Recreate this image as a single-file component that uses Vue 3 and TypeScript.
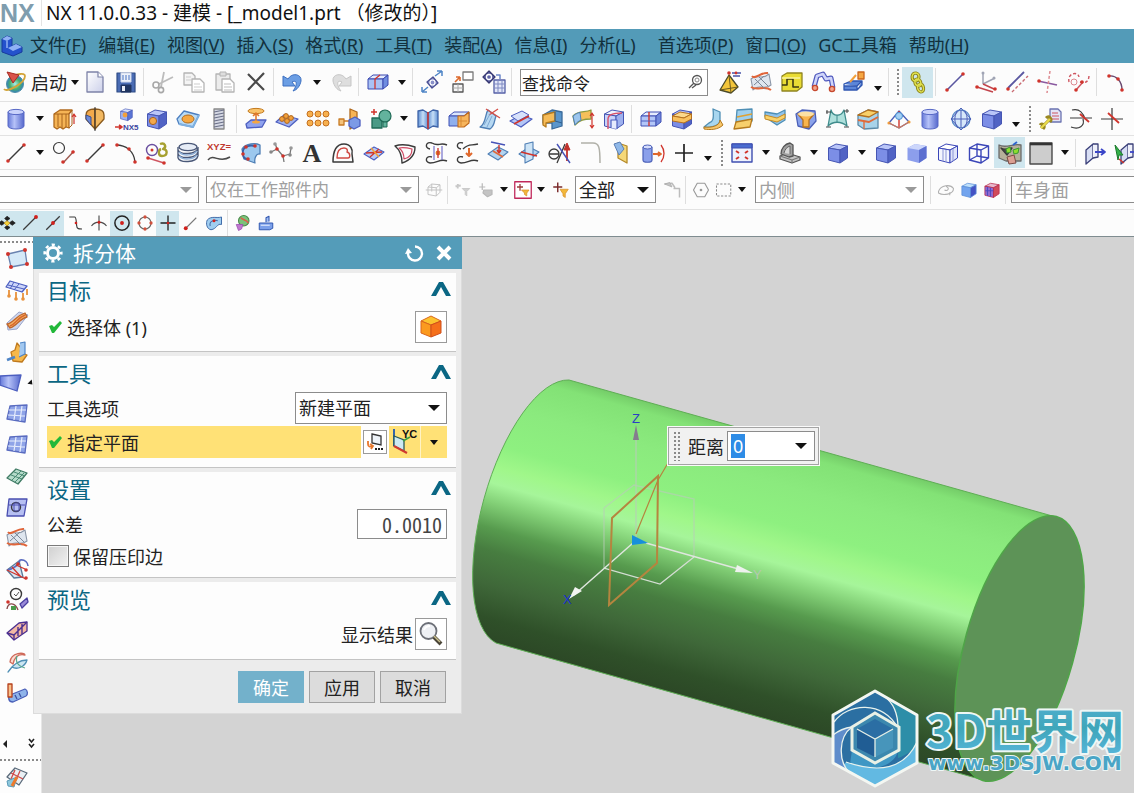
<script setup lang="ts">
import { ref } from 'vue'

type Menu = { text: string; key?: string; wide?: boolean }

const menus: Menu[] = [
  { text: '文件', key: 'F' },
  { text: '编辑', key: 'E' },
  { text: '视图', key: 'V' },
  { text: '插入', key: 'S' },
  { text: '格式', key: 'R' },
  { text: '工具', key: 'T' },
  { text: '装配', key: 'A' },
  { text: '信息', key: 'I' },
  { text: '分析', key: 'L' },
  { text: '首选项', key: 'P', wide: true },
  { text: '窗口', key: 'O' },
  { text: 'GC工具箱' },
  { text: '帮助', key: 'H' },
]

/* ---- drawing helpers for the 24 x 24 icon grid ---- */
const p = (d: string, stroke = 'none', fill = 'none', w = 1.3): string =>
  `<path d="${d}" stroke="${stroke}" fill="${fill}" stroke-width="${w}" stroke-linejoin="round"/>`
const dot = (x: number, y: number, c = '#d0342c', r = 1.8): string => `<circle cx="${x}" cy="${y}" r="${r}" fill="${c}"/>`
const ring = (x: number, y: number, r: number, c: string, w = 1.3, f = 'none'): string =>
  `<circle cx="${x}" cy="${y}" r="${r}" stroke="${c}" stroke-width="${w}" fill="${f}"/>`
const cube = (front = '#7c8ee6', top = '#b9c5f8', side = '#5163c4', edge = '#4656b4'): string =>
  p('M2.500 7 10 3 21.500 5 14 9Z', edge, top, 1) + p('M2.500 7 14 9V22L2.500 19Z', edge, front, 1) + p('M14 9 21.500 5V17L14 22Z', edge, side, 1)
const slab = (front: string, top: string, side: string, edge: string): string =>
  p('M2 9 7 5H22L17 9Z', edge, top, 1) + p('M2 9H17V19H2Z', edge, front, 1) + p('M17 9 22 5V15L17 19Z', edge, side, 1)
const cyl = (f = 'url(#gBlueH)', s = '#5869c6'): string =>
  p('M4 5V19C4 23 20 23 20 19V5', s, f, 1) + `<ellipse cx="12" cy="5" rx="8" ry="2.600" fill="#c9d2fb" stroke="${s}"/>`
const sheet = (f = '#a9d3ee', s = '#4f7fb5'): string => p('M2 13 12 6 22 11 12 19Z', s, f, 1.1)
const wave = (f: string, s: string): string => p('M2 9C8 3 12 11 20 4L22 15C15 21 10 13 4 20Z', s, f, 1.1)

const R = '#d0342c'
const K = '#3a3a3a'
const G = '#b4b4b4'
const B = '#4d5fc0'
const O = '#f2a03a'

const icons: Record<string, string> = {
  launch: ring(12, 14, 8.500, '#4f8fa8', 1, 'url(#gGlobe)') + p('M1 19C4 23 22 13 22 6C22 2 12 5 12 5', '#d3a53a', 'none', 1.8) + p('M4 2 16 5 10 13Z', '#a82a22', '#d9534a', 1),
  new: p('M4 2H15L20 7V22H4Z', '#7d83a8', 'url(#gPage)', 1.3) + p('M15 2V7H20', '#7d83a8', '#fff', 1.2),
  save: p('M3 3H21V22H3Z', '#2f4c86', '#4a6cb4', 1.2) + p('M7 3H17V12H7Z', '#cfd8ea', '#eef2fa', 1) + p('M7 15H17V22H7Z', '#203560', '#203560', 1) + p('M8 16H11V21H8Z', 'none', '#e8ecf5') + p('M9 5V10M12 5V10M15 5V10', '#6d8fd0'),
  cut: p('M22 7 8 14M13 2 10 17', '#bcbcbc', 'none', 1.8) + ring(5, 15, 3, '#a8a8a8', 1.6) + ring(10, 20, 2.600, '#a8a8a8', 1.6),
  copy: p('M2 3H10L13 6V15H2Z', G, '#f4f4f4') + p('M10 9H18L22 13V22H10Z', G, '#fff') + p('M12 14H18M12 17H20M12 20H20M4 7H9M4 10H9', '#cdcdcd', 'none', 1),
  paste: p('M3 4H17V20H3Z', G, '#ececec') + p('M7 2H13V6H7Z', G, '#ddd', 1) + p('M9 9H17L21 13V22H9Z', G, '#fff') + p('M11 14H18M11 17H19M11 20H19', '#bdbdbd', 'none', 1),
  del: p('M4 4 20 20M20 3 4 20', '#4a4a4a', 'none', 2.2),
  undo: p('M7 9C11 2 21 4 20 11C19 16 16 20 12 21C16 16 17 9 11 12L14 16H2V6Z', '#3c6fc0', '#6b9ee4', 1),
  redo: p('M17 9C13 2 3 4 4 11C5 16 8 20 12 21C8 16 7 9 13 12L10 16H22V6Z', '#c6c6c6', '#dedede', 1),
  boxRed: slab('#a9c2f4', '#e3ebfd', '#6f8de0', '#3a49b0') + p('M9 9V19M9 9 14 5', R, 'none', 1.3),
  diag: p('M7 12 13 7 18 13 12 18Z', '#4a4f93', '#8990c9') + ring(12.500, 12.500, 2.500, '#fff', 1.2) + p('M15 6 22 1M22 1V6M22 1H17M8 17 2 22M2 22V17M2 22H7', '#4f85c6', 'none', 1.5),
  move2: p('M12 2H22V10H12Z', '#7a7a7a', '#fff') + p('M2 14H12V22H2Z', '#555', '#f6f6f6') + p('M2 18H12M7 14V22', '#aaa', 'none', 1) + p('M4 12 9 7M9 7H5M9 7V11', '#dd6a2c', 'none', 1.6),
  grids: p('M7 1 13 7 7 13 1 7Z', '#35366f', '#5f64a6') + ring(7, 7, 2.500, '#fff', 1.3) + p('M12 10H23V23H12Z', '#5560a6', '#e2e6f8') + p('M12 14H23M12 18H23M16 10V23M20 10V23', '#7f8ac2', 'none', 1) + p('M14 5H18V9', '#6b86c9', 'none', 1.5),
  pyramid: p('M11 5 2 20 13 23 20 17Z', '#4a4a2a', '#f3c53a') + p('M11 5 13 23M2 20 20 17', '#6c5a1c', 'none', 1) + dot(11, 3) + p('M14 3H23M15 6H22', '#4753a8', 'none', 1.4) + dot(18, 3, R, 1.4),
  mesh: wave('#dfe6ef', '#8a95a6') + p('M3 6C6 10 12 2 19 3M2 17C8 21 16 15 22 20', '#e0653a', 'none', 2) + p('M6 9 16 19M10 7 19 16M5 15 15 6', '#7b8797', 'none', 1),
  yellowBox: p('M2 6 7 3H22V17L17 21H2Z', '#8f8420', '#e9dc34') + p('M2 15H7V9H13V17H19', '#3d3a12', 'none', 1.6) + p('M2 8H20', '#f9f39a', 'none', 1.6),
  pipe: p('M3 17 6 6 12 4 15 9 20 8 22 18', '#5059bd', 'none', 5) + p('M3 17 6 6 12 4 15 9 20 8 22 18', '#cfd5fa', 'none', 2.6) + ring(4, 18, 2.600, '#c6482e', 1.4, '#f3a48c') + ring(21, 19, 2.600, '#c6482e', 1.4, '#f3a48c'),
  blueUp: p('M2 14 9 11H20L15 16H2ZM2 14V20H15V16M15 20 20 15V11', '#2f56b0', '#5c86d8') + p('M8 12 14 5', O, 'none', 2) + p('M16 2H22V9H16Z', '#c8641c', '#f5a742'),
  chain: p('M10 3C5 3 5 10 9 11C13 12 15 4 10 3ZM11 9C8 9 8 15 12 16C16 17 16 10 11 9ZM14 14C10 14 11 21 15 22C19 22 18 14 14 14Z', '#8c8416', 'none', 3.2) + p('M10 3C5 3 5 10 9 11C13 12 15 4 10 3ZM11 9C8 9 8 15 12 16C16 17 16 10 11 9ZM14 14C10 14 11 21 15 22C19 22 18 14 14 14Z', '#dfe04f', 'none', 1.3),
  line: p('M4 20 20 4', K, 'none', 1.4) + dot(4, 20) + dot(20, 4),
  lineB: p('M4 20 20 4', '#5a57a0', 'none', 1.6) + dot(4, 20) + dot(20, 4),
  csys: p('M9 14V3M9 14 21 8', '#a0a4b4', 'none', 1.5) + p('M3 17 19 22M9 14 20 19', '#c2444c', 'none', 1.5) + dot(3, 17) + dot(21, 19) + dot(20, 8, '#a0a4b4', 1.5) + dot(9, 3, '#a0a4b4', 1.5),
  parallel: p('M3 18 19 2', '#5a57a0', 'none', 1.8) + dot(3, 19) + `<path d="M7 22 23 6" fill="none" stroke="#c96a72" stroke-width="1.400" stroke-dasharray="3 2"/>`,
  cross: p('M2 11 21 15', '#8a5aa0', 'none', 1.6) + dot(3, 11) + `<path d="M14 1 11 23" fill="none" stroke="#dd8c92" stroke-width="1.500" stroke-dasharray="3 2"/>`,
  tangent: `<path d="M2 12C0 3 11 1 12 7M13 12C20 14 22 10 22 5" fill="none" stroke="#cf5560" stroke-width="1.400" stroke-dasharray="3 2"/>` + p('M9 20 16 12', '#cf5560', 'none', 1.5) + dot(9, 20) + dot(15, 12) + ring(7, 12, 3, '#dc8890', 1),
  arc: p('M5 6C12 5 18 11 18 20', '#6a4a70', 'none', 1.4) + dot(5, 6) + dot(14, 9) + dot(18, 20),
  cylinder: cyl(),
  extrude: p('M2 7 8 3H20L17 7V21L14 20 11 22 8 20 5 22 2 20Z', '#b06a1e', '#f5b455') + p('M6 7V20M10 7V21M14 7V20M2 7H17L20 3V18L17 21', '#a8641e', 'none', 1) + p('M22 17V8M20 10 22 7 24 10', R, 'none', 1.2),
  revolve: p('M12 2C6 2 3 4 3 8V12L12 22Z', '#8a5a1e', '#f2a94b') + p('M12 2C18 2 21 4 21 8V12L12 22Z', '#8a5a1e', '#f2b860') + p('M3 8 8 10V18L3 12Z', '#3a4e8a', '#6d8ad8', 1) + p('M12 0V24', '#333', 'none', 1),
  nx5: `<g transform="translate(5 0) scale(.62)">${cube('#9db2f2', '#d6e0fc', '#5a74d4')}</g>` + dot(11, 8, O, 2.400) + p('M1 20H7M5 18 8 20 5 22', R, 'none', 1.6) + '<text x="9" y="23" font-size="8" font-weight="700" font-family="Liberation Sans" fill="#3b46a0">NX5</text>',
  cubeHole: cube() + ring(8, 14, 3.600, '#a8641e', 1, '#f3a94c'),
  plateHole: p('M1 12 8 4 23 8 17 20 3 17Z', '#4d7fc0', '#b9dbf6') + `<ellipse cx="12" cy="12" rx="6" ry="4" fill="#f5a742" stroke="#b06a1e"/>` + p('M3 17 17 20 23 8', '#7fb0e0', 'none', 2),
  screw: p('M7 2H17V22H7Z', '#888', '#d5d8e4') + p('M7 5 17 3M7 8 17 6M7 11 17 9M7 14 17 12M7 17 17 15M7 20 17 18', '#6b7088', 'none', 1.2),
  pad: p('M2 17 7 13H22L18 20 3 21Z', B, '#8fa2ee') + `<ellipse cx="12" cy="4" rx="8" ry="2.600" fill="#f9c36a" stroke="#c47a1e"/>` + p('M12 15V6M9 9 12 6 15 9', '#e0782c', 'none', 1.6) + `<ellipse cx="12" cy="15" rx="4" ry="1.600" fill="#f5a742"/>`,
  patternA: p('M1 15 9 8 23 12 14 20Z', B, '#9fb0ee') + [[7, 12], [12, 14], [11, 9], [16, 11]].map(([x, y]) => ring(x, y, 2.400, '#b0661c', 1, '#f2a03a')).join(''),
  patternB: [4, 12, 20].map((x) => ring(x, 7, 3, '#c46f1e', 1, '#f7b04e') + ring(x, 16, 3, '#c46f1e', 1, '#f7b04e')).join(''),
  mirrorF: p('M13 2 20 5V17L13 22Z', '#b06a1e', '#f7b455') + p('M2 12H7V18H2ZM7 14H12', '#c77a24', '#f4c27a') + p('M12 13 18 10 23 13V19L17 22 12 19Z', B, '#7c9ae6'),
  plusGreen: p('M6 8V2M3 5H9', R, 'none', 1.5) + p('M4 11H14V21H4Z', '#1e6a56', '#4a9a86') + ring(17, 9, 6, '#1e6a56', 1.2, '#63b39d') + p('M15 15H19V20H15Z', '#1e6a56', '#63b39d', 1),
  book: p('M2 4 7 3 12 6V22L7 19 2 20Z', '#3f64a8', 'url(#gSky)') + p('M22 4 17 3 12 6V22L17 19 22 20Z', '#3f64a8', 'url(#gSky)') + p('M12 5V22', R, 'none', 1.5),
  splitB: slab('#8fb0ee', '#dbe6fc', '#5a7bd8', '#4050b4') + p('M11 9H17L22 5V16L17 20H11Z', '#c06a1c', '#f7b55c', 1.1) + p('M14 9V19M11 14H20', '#d88a34', 'none', 1),
  trim: p('M2 20C8 17 7 7 10 3L18 9C16 14 17 19 12 22Z', '#4f7fb5', '#b6d8f2') + p('M8 2 22 11M11 8 20 2', '#d64f47', 'none', 1.4) + p('M6 18 12 7M9 20 14 9', '#7fa9d4', 'none', 1),
  trimSheet: p('M1 14 12 8 23 12 12 20Z', B, '#b4c6f6') + p('M2 9 13 4 20 8 9 14Z', B, '#d7e1fb', 1) + p('M5 17 20 9', R, 'none', 1.6),
  cutBody: p('M3 8 12 3 22 5V19L12 22V16H3Z', '#3a6a9a', '#5a96cc') + p('M3 8 15 5V14L6 16V20L3 18Z', '#b57a1e', '#f6bc58') + p('M15 5V14L22 16', '#2f5f90', 'none', 1),
  bend: p('M2 9C8 3 14 6 20 3V12C13 12 9 13 4 18Z', '#8b9a40', '#f5c05a') + p('M2 9C6 6 7 6 9 5.500L10 13C8 14 6 15 4 18Z', '#4f7fb5', '#9cc6ee', 1) + p('M21 6V21M19 9 21 6 23 9M19 18 21 21 23 18', R, 'none', 1.2),
  shell: cube('#c7d3fa', '#eff3fe', '#9db0ee') + p('M6 22V12C6 8 12 6 20 6', '#d64f6a', 'none', 1.4) + p('M9 21V13H15V22', B, '#e6ebfd', 1.2),
  slab1: slab('#b2c6f8', '#e6edfe', '#7088dc', '#4050b4') + p('M10 5V19', R, 'none', 1.4) + p('M2 14H17', B, 'none', 1),
  slab2: cube() + p('M2.500 9 10 5 21.500 7 14 11Z', '#b5701c', '#fbd98c', 1) + p('M2.500 9 14 11 21.500 7V12L14 16 2.500 14Z', '#b5701c', '#f8c15e', 1),
  flange: p('M12 2 19 5V13C19 19 10 21 3 20L8 16C12 15 13 12 12 2Z', '#4f8fb5', '#a8d6ef') + p('M3 20C10 21 19 19 19 13L22 18C17 23 9 23 3 22Z', '#b57a1e', '#f7c66a', 1),
  flange2: p('M5 3 20 2V14L4 15Z', '#4f8fb5', '#9fd0ee') + p('M4 15 20 12 18 20 2 22Z', '#b57a1e', '#f7cf6c') + p('M5 10 20 7', '#e0a030', 'none', 1.6),
  loftS: p('M2 5 14 7 22 3V13L14 18 2 10Z', '#4f8fb5', '#8fc3ec') + p('M2 8 14 11 22 7V11L14 15 2 12Z', '#c58a24', '#f9d26a', 1),
  funnel: p('M2 7 8 3 21 4 22 14 15 22 4 19Z', '#4a5fb8', '#8aa2ea') + p('M4 7H20L15 13V20H9V13Z', '#b5701c', '#f8b44e') + `<ellipse cx="12" cy="7" rx="8" ry="2.500" fill="#fbe0a4"/>`,
  saddle: p('M6 3C8 10 16 10 19 3L22 19C16 14 8 14 3 19Z', '#3f8c8c', '#aee0dc') + p('M1 5H6M19 4H24M1 20H6M19 20H24M2 3V7M22 2V6', '#444', 'none', 1) + p('M12 9V15', '#3f8c8c', 'none', 1),
  ribbon: p('M2 8 12 3 22 5V21L8 22 2 18Z', '#5b8aa8', '#a8d3ea') + p('M2 8 12 3 22 5 13 10Z', '#b5701c', '#f8d06a') + p('M2 13 13 15 22 10', '#e06a3a', 'none', 2) + p('M8 14V22', '#e06a3a', 'none', 1.4),
  cone3: p('M12 4 2 16 12 21 22 15Z', '#4a5fb8', 'none') + p('M12 4V20', R, 'none', 1.4) + ring(12, 9, 3.500, '#4a8fd0', 1, '#a4d0f4') + dot(2, 16, '#f2a03a', 1.6) + dot(22, 15, '#f2a03a', 1.6) + p('M2 16 12 21 22 15', '#cf7a5a', 'none', 1.3),
  cylBlue: cyl(),
  sphere: ring(12, 12, 9, '#5a8cc8', 1.3, '#d6e8fa') + p('M12 1 22 12 12 23 2 12ZM3 12H21M12 3V21M8 4C5 10 5 16 9 21M16 4C19 10 19 16 15 21', '#4a5fb8', 'none', 1),
  cube: cube(),
  cubeSoft: p('M2.500 7 10 3 21.500 5V17L14 22 2.500 19Z', 'none', '#8c9eec') + p('M2.500 7 10 3 21.500 5 14 9Z', 'none', '#ccd6fb') + p('M14 9 21.500 5V17L14 22Z', 'none', '#5c6fd0'),
  cubeWireA: cube('#f4f6fe', '#fff', '#dfe4fa', '#3b46b8') + p('M7 8V20M10 9V21M17 8V20', '#8b96d6', 'none', 1),
  cubeWire: p('M2.500 7 10 3 21.500 5 14 9ZM2.500 7V19L14 22V9M21.500 5V17L14 22M10 3V15L2.500 19M10 15 21.500 17', '#3b46b8', 'none', 1.4),
  wrench: p('M12 2H20L23 5V15H12Z', '#6a72b0', '#e3e5f6') + p('M14 6H20M14 9H21M14 12H21', '#cf5560', 'none', 1) + p('M3 21 12 12M8 11C11 8 15 12 12 15M2 18C4 15 8 19 5 22', '#9a8820', 'none', 3) + p('M3 21 12 12', '#eadd4c', 'none', 2),
  curveX: p('M3 3C11 1 14 6 16 12M1 11H23M2 20C10 23 16 19 14 12', K, 'none', 1.2) + p('M11 7 20 15', R, 'none', 1.8),
  crossX: p('M12 1V23M1 12H23', K, 'none', 1.2) + p('M8 6 19 16', R, 'none', 1.8),
  circLine: ring(7, 7, 5.500, K, 1.2) + p('M11 22 22 10', '#9c5a50', 'none', 1.4) + dot(11, 21) + dot(21, 11),
  arc3: p('M2 4C12 4 20 10 21 21', K, 'none', 1.3) + dot(3, 4) + dot(15, 8) + dot(21, 21),
  rings: ring(7, 9, 5.500, '#6a4fa0', 1.4) + dot(7, 9, R, 1.5) + p('M15 3C20 1 22 6 18 8C23 8 23 15 17 15C13 15 13 9 16 8', '#a6a030', 'none', 2.4) + p('M3 17 19 22', '#cf5560', 'none', 1.4) + dot(3, 17) + dot(19, 22),
  helix: `<ellipse cx="12" cy="6" rx="9" ry="3.600" fill="#e6ecf6" stroke="#4a5878" stroke-width="1.400"/>` + p('M2 9C4 14 20 14 22 7M2 13C4 18 20 18 22 11M2 17C4 22 20 22 22 15M2 6V17M22 6V15', '#4a5878', 'none', 1.4) + p('M3 11C8 16 18 14 21 10M3 15C8 20 18 18 21 14', '#8fb0d8', 'none', 1.4),
  xyz: '<text x="0" y="9" font-size="9.500" font-weight="700" font-family="Liberation Sans" fill="#c0392f">XYZ=</text>' + p('M1 19C7 12 12 23 23 16', '#4a4a4a', 'none', 1.5),
  surfPts: p('M4 8C8 2 18 2 22 4V13C18 12 16 18 17 22L6 18Z', '#4f7fb5', '#9cc8ee') + p('M17 5C8 3 4 8 5 13C5 16 7 18 10 18', '#3a5fa8', 'none', 1.8) + dot(5, 13) + dot(8, 6) + dot(17, 5) + dot(10, 18),
  nodes: p('M2 11 8 8 14 15 21 13M8 8 6 2M14 15 15 21M21 13 22 7', '#777', 'none', 1.3) + dot(2, 11, '#888') + dot(6, 3, '#999') + dot(8, 8) + dot(14, 15) + dot(21, 14, '#888') + dot(22, 7, '#999'),
  letter: '<text x="12" y="21" text-anchor="middle" font-size="26" font-weight="700" font-family="Liberation Serif" fill="#333">A</text>',
  offset: p('M2 21C2 8 6 3 13 3C20 3 22 9 21 13L22 21Z', K, 'none', 1.5) + p('M6 17C6 10 9 7 13 7C16 7 17 9 16 11C20 12 19 17 17 17Z', '#cf4a44', 'none', 1.4),
  sheetRed: sheet('#b9c9f6', B) + p('M4 12 20 11M8 16 17 8', R, 'none', 1.3) + p('M9 7 17 16', O, 'none', 1.6),
  shield: p('M2 5C8 3 16 4 22 6C22 14 18 19 9 22C9 15 7 9 2 5Z', K, 'none', 1.4) + p('M6 7C11 6 15 7 19 8C19 13 16 17 11 18C11 13 10 10 6 7Z', '#cf4a64', 'none', 1.2),
  joinA: p('M8 2C2 0 0 7 6 8M8 2C14 6 16 1 23 4M8 16C2 14 0 21 6 22M6 22C14 22 16 17 23 20', K, 'none', 1.4) + p('M10 5V19M18 5V19', '#5a57c0', 'none', 1) + dot(14, 12, '#e0782c', 2.400) + p('M14 7V17', R, 'none', 1.3),
  joinB: p('M8 2C2 0 0 7 6 8M8 8C14 2 16 5 23 3M8 16C2 14 0 21 6 22M6 22C14 22 16 17 23 20', K, 'none', 1.4) + p('M14 7V14M11 12 14 15 17 12', '#e0682c', 'none', 2),
  project: sheet('#b2d4f0', '#4f7fb5') + p('M5 1 19 4', '#4753b8', 'none', 1.6) + p('M13 4V11M11 9 13 12 15 9', R, 'none', 1.4) + p('M7 10 17 16', '#e06a3a', 'none', 1.6),
  interS: sheet('#b2d4f0', '#4f7fb5') + p('M8 3 16 1V18L8 22Z', '#4f7fb5', '#cde4f6', 1.1) + p('M4 11 20 15', R, 'none', 1.8),
  sketchX: ring(6, 13, 5, K, 1.3) + p('M1 13H11M17 3 9 22', K, 'none', 1.3) + p('M19 20V7', '#c0322c', 'none', 1.8) + p('M16 9 19 2 22 9Z', '#c0322c', '#c0322c', 1) + p('M9 3 22 22', '#4753b8', 'none', 1.4),
  corner: p('M2 2H14C20 2 21 6 21 22', '#b0b0a8', 'none', 1.5),
  foldY: p('M8 2 17 5V22L8 17Z', '#b58a2a', '#f5d878') + p('M4 3 10 1 14 8 9 14Z', '#5a7fb5', '#8fb8e8', 1),
  cylArrow: p('M2 6V19C2 22 11 22 11 19V6', '#4a5fb8', '#8ba0ea', 1.2) + `<ellipse cx="6.500" cy="6" rx="4.500" ry="2" fill="#d4dcfb" stroke="#4a5fb8"/>` + p('M12 13H19M17 11 20 13 17 15', '#e0682c', 'none', 1.8) + p('M20 4C24 9 24 16 20 21', R, 'none', 1.3),
  plus: p('M12 3V21M3 12H21', '#222', 'none', 1.7),
  fit: p('M2 3H22V21H2Z', '#3f4fb0', '#eef2fd', 1.4) + p('M2 3H22V7H2Z', '#3f4fb0', '#4a6cd0', 1) + p('M6 10 9 12M6 18 9 16M18 10 15 12M18 18 15 16', R, 'none', 2),
  orient: p('M2 15 9 12 22 16V19L14 22 2 18Z', '#555', '#c4c4c4') + p('M3 13C3 7 7 3 12 2L15 4V15L11 16Z', '#555', '#a0a0a0') + p('M6 12C7 8 9 6 12 5V13', '#666', '#d8d8d8', 1) + p('M2 15 14 19 22 16M14 19V22', '#777', 'none', 1.2),
  render: p('M1 4C8 8 15 2 23 4V20H8L1 17Z', '#6b6b6b', '#b5b09a') + p('M3 7C8 10 12 6 14 7L9 14Z', '#3a3a3a', '#4a4a4a') + p('M8 8 12 6 13 11 9 12ZM15 9 21 7 20 12 16 13Z', '#3a9a30', '#8ede2c', 1) + p('M15 4 19 1', '#2f66d0', 'none', 1.8) + p('M9 16 16 14 18 22 11 23Z', '#7a4a44', '#dba093', 1),
  swatch: p('M1 2H23V23H1Z', '#4a4a4a', '#cdcdcd', 1.4) + p('M1 3H23', '#333', 'none', 2.6),
  clipA: p('M3 9 10 3V17L3 23Z', '#3a3f78', '#d8def4') + p('M10 3H15V16L10 17', '#3a3f78', '#eef0fa') + p('M12 11H21M18 8 22 11 18 14', '#3b46c8', 'none', 1.8),
  clipB: p('M7 9 14 3V17L7 23Z', '#3a3f78', '#d8def4') + p('M14 3H19V16L14 17', '#3a3f78', '#eef0fa') + p('M1 4 9 14 5 14 4 19Z', '#1a7a2a', '#35b04a', 1) + p('M5 18 10 22', R, 'none', 1.6) + p('M16 11H23', '#3b46c8', 'none', 1.8),
  ghostCube: p('M4 8 9 4 20 5V15L15 20 4 18ZM4 8 15 9 20 5M15 9V20M9 4V14M1 12H23', '#c2c2c2', 'none', 1.3),
  ghostFilter: p('M2 7 9 6M5 4V10', '#c8c8c8', 'none', 2.4) + p('M11 10H21L17 14V20L15 18V14Z', '#c8c8c8', '#d0d0d0'),
  ghostHand: p('M3 8H11M7 3V12M9 12H20V18L14 21 8 16Z', '#b8b8b8', '#c4c4c4', 1.6),
  snapBox: p('M1 1H23V23H1Z', '#c0285a', '#fff', 1.7) + p('M8 4V13M4 8H12', '#9c3a3a', 'none', 1.7) + p('M10 12H20L17 16V20L14 18V16Z', '#d9902c', '#f2b83a', 1),
  snapStar: p('M9 2V15M3 8H15', '#7a2a2a', 'none', 1.9) + p('M12 11H23L19 17V22L16 20V17Z', '#d9902c', '#f2b83a', 1),
  ghostArrow: p('M2 4 12 3 16 9M14 10H22V22', '#bdbdbd', 'none', 2) + p('M2 4 9 2 12 8Z', '#aaa', '#c4c4c4', 1),
  hexDot: p('M7 3H17L22 12 17 21H7L2 12Z', '#999', 'none', 1.5) + dot(12, 12, '#999', 1.8),
  dashBox: '<rect x="2" y="4" width="19" height="16" fill="none" stroke="#8a8a8a" stroke-width="1.400" stroke-dasharray="3 2"/>',
  ghostEye: p('M2 14C5 5 18 4 22 10C22 18 8 20 2 16ZM12 7C18 10 14 14 10 12M17 15V19', '#b0b0b0', 'none', 1.4),
  cubeSky: cube('#72a4ee', '#bfe0fa', '#4452c4', '#5a8ed8'),
  cubeMag: cube('#8f6ad0', '#e8b8cc', '#d04a5a', '#b82a4a') + p('M6 8V20M10 9V21M3 13H14', '#4a4ac0', 'none', 1.2),
  sQuads: p('M1 12 5 9 9 12 5 15ZM9 6 12 3 16 6 12 9ZM15 12 19 9 23 12 19 15ZM9 18 12 15 16 18 12 21Z', '#222', '#222', 1) + p('M8 12 12 9 16 12 12 16Z', '#b58a2a', '#f6d23a', 1),
  sEnd: p('M3 21 20 4', K, 'none', 1.7) + dot(20, 4, '#d0201c', 2.600),
  sMid: p('M3 21 21 3', K, 'none', 1.7) + dot(12, 12, '#d0201c', 2.600),
  sCtrl: p('M3 4H10C13 4 12 12 13 16C13 20 16 20 20 20', K, 'none', 1.5) + dot(12, 12, '#d0201c', 1.8),
  sInt: p('M12 2V22M2 16C7 9 17 9 22 16', '#4a4a4a', 'none', 1.5) + dot(12, 11, '#d0201c', 2),
  sCen: ring(12, 12, 9.500, '#222', 2) + dot(12, 12, '#d0201c', 2.600),
  sQuad: ring(12, 12, 8, '#6a6a6a', 1.5) + dot(12, 4, '#d0503c', 2.200) + dot(12, 20, '#d0503c', 2.200) + dot(4, 12, '#d0503c', 2.200) + dot(20, 12, '#d0503c', 2.200),
  sPt: p('M12 2V22M2 12H22', '#222', 'none', 1.8) + dot(12, 12, '#d0201c', 1.8),
  sOn: p('M4 20 19 5', '#7a7a7a', 'none', 1.5) + dot(5, 19, '#d0201c', 2.600),
  sFace: p('M3 8C8 2 16 6 22 4V14C16 12 16 20 8 21C2 20 1 12 3 8Z', '#3f6aa8', '#9fcdf0') + p('M7 16C5 10 12 7 17 9', '#3f6aa8', 'none', 1.4) + dot(12, 9, '#d0201c', 2),
  bulb: ring(13, 9, 7, '#4a8a4a', 1.4, '#7cc27a') + p('M9 5C13 9 17 7 19 12', '#e05a4a', 'none', 2) + p('M3 14H12L10 20 6 22Z', '#9a4ab0', '#c07ad0', 1),
  press: p('M3 12H21V19L17 21H3Z', '#2f56b0', '#7ba0ea') + p('M12 11V5L16 3V10', '#2f56b0', '#a4bff4', 1.4) + p('M5 15H17', '#dbe6fc', 'none', 1.6),
  quad: p('M3 7 20 3 22 17 6 20Z', '#6a83b0', '#d5e9f8') + dot(3, 7, R, 2) + dot(20, 3, R, 2) + dot(22, 17, R, 2) + dot(6, 20, R, 2),
  gridDown: p('M5 3 22 8 17 14 1 9Z', B, '#cdd6fa') + p('M9 4 5 11M14 6 9 12M3 7 19 11', B, 'none', 1) + p('M4 12V18M11 14V21M18 15V21M22 11V17', '#e8923c', 'none', 1.8) + dot(4, 18, '#e8923c') + dot(11, 21, '#e8923c') + dot(18, 21, '#e8923c'),
  tape: p('M2 14 14 3 23 6 12 20 3 21Z', '#9aa4c8', '#cdd6ee', 1) + p('M2 15C9 14 10 7 20 4L22 8C14 10 12 17 5 19Z', '#c0662c', '#f4b266') + p('M5 17C11 15 12 9 20 6', '#d9662c', 'none', 1.4),
  star: p('M6 12 10 10 12 3 16 8 15 12 22 15 17 22 8 21Z', '#c07a1e', '#f6b84a') + p('M15 3 20 2V14L14 17', '#4f85c6', '#a2c8f0', 1.2) + p('M2 20 10 17', '#4f85c6', 'none', 2.6),
  plane: p('M-5 5 16 4 12 20 -5 14Z', B, 'url(#gBlueH)'),
  gridP: p('M5 4 22 3 20 20 2 17Z', '#5a6cc0', '#8fa4e8') + p('M4 8 21 8M3 13 20 14M11 4 9 18M17 4 15 19', '#e8eefc', 'none', 1.2),
  gridGreen: p('M2 14 11 5 22 9 13 20Z', '#3f7a64', '#b6dccb') + p('M6 11 17 15M9 8 20 12M7 16 16 7M10 18 19 9', '#4a8a74', 'none', 1),
  gridRound: p('M4 4H22L19 21H2Z', '#4a4fb0', '#b6bff2') + ring(11, 12, 4.500, K, 1.4) + p('M4 10H20M9 8H14V16H9Z', '#4a4fb0', 'none', 1),
  fan: p('M2 13 14 4 18 20 9 21Z', '#5a7a9a', '#d8e6f2') + p('M2 13C8 12 14 8 15 3C20 2 23 6 23 9', '#5a6cc0', 'none', 1.6) + p('M2 13 21 22M7 10 16 20M11 8 20 12', R, 'none', 1.3) + dot(13, 7) + dot(21, 13) + dot(21, 21),
  clock: ring(11, 6, 5.500, K, 1.4) + p('M9 6 11 8 14 4', '#555', 'none', 1) + p('M15 16 22 10 23 14 17 20Z', '#4a3fa0', '#9a8ad8') + p('M2 21C3 14 10 14 13 22', '#8a4a4a', 'none', 1.4) + p('M6 18H11V22H6Z', 'none', '#4a9a4a') + dot(3, 14),
  prism: p('M2 14 14 4 22 3V12L9 21Z', '#4a2f90', '#f2b8a4') + p('M2 14 9 16V21M9 16 22 3M13 8V17M17 5V15', '#4a2f90', 'none', 1.4),
  swoosh: p('M5 12C6 2 20 2 20 5C12 3 9 9 8 14Z', '#cf6a5a', '#fbdcd2') + p('M3 22C7 16 14 10 22 10C20 17 12 20 7 17Z', '#4f8fb5', '#cbe6f2') + p('M12 6C10 12 13 16 20 18', '#5aa88a', 'none', 1.3),
  tube: p('M5 14 20 8C23 9 23 14 21 15L8 21C3 21 3 16 5 14Z', '#4a5fb8', '#8fb4ea') + p('M3 3H7V16H3Z', '#b5401c', '#f8c08a') + p('M10 14 12 18M14 12 16 16', '#3a4fa0', 'none', 1.3),
  plane3d: p('M2 12 10 3 22 8 14 20Z', '#5a6a7a', '#eaf0f4') + p('M6 8 18 14M10 5 6 14M15 6 10 17', '#cf4a4a', 'none', 1.3) + p('M2 16 12 12 9 22 3 21Z', '#5a9ab8', '#8ec8dc', 1) + p('M7 21 12 12', '#ee7a2c', 'none', 3),
}

const rowStandard1 = ['new', 'save', '|', 'cut', 'copy', 'paste', 'del', '|', 'undo', 'v', 'redo', '|', 'boxRed', 'v', '|', 'diag', 'move2', 'grids', '|']
const rowStandard2 = ['pyramid', 'mesh', 'yellowBox', 'pipe', 'blueUp', 'V', '|', ':', '*chain', '|', 'lineB', 'csys', 'parallel', 'cross', 'tangent', '|', 'arc']
const rowFeature = ['cylinder', 'v', 'extrude', 'revolve', 'nx5', 'cubeHole', 'plateHole', 'screw', '|', 'pad', 'patternA', 'patternB', 'mirrorF', 'plusGreen', 'v', 'book', 'splitB', 'trim', 'trimSheet', 'cutBody', 'bend', 'shell', '|', 'slab1', 'slab2', 'flange', 'flange2', 'loftS', 'funnel', 'saddle', 'ribbon', 'cone3', 'cylBlue', 'sphere', 'cube', 'V', ':', 'wrench', 'curveX', 'crossX']
const rowCurve = ['line', 'v', 'circLine', 'line', 'arc3', 'rings', 'helix', 'xyz', 'surfPts', 'nodes', 'letter', 'offset', 'sheetRed', 'shield', 'joinA', 'joinB', 'project', 'interS', 'sketchX', 'corner', 'foldY', 'cylArrow', 'plus', 'V', ':', 'fit', 'v', 'orient', 'v', 'cube', 'v', 'cube', 'cubeSoft', 'cubeWireA', 'cubeWire', '*render', 'swatch', 'v', '|', 'clipA', 'clipB']
const filterA = ['ghostCube', '|', 'ghostFilter', 'ghostHand', 'v', 'snapBox', 'v', 'snapStar']
const filterB = ['ghostArrow', '|', 'hexDot', 'dashBox', 'v']
const filterC = ['|', 'ghostEye', 'cubeSky', 'cubeMag', '|']
const rowSnap = ['*sQuads', '*sEnd', '*sMid', 'sCtrl', 'sInt', '*sCen', 'sQuad', '*sPt', 'sOn', 'sFace', '|', 'bulb', 'press']
const side = ['quad', 'gridDown', 'tape', 'star', 'plane', 'gridP', 'gridP', 'gridGreen', 'gridRound', 'mesh', 'fan', 'clock', 'prism', 'swoosh', 'tube']

const kind = (t: string): string =>
  t === '|' ? 'sep' : t === ':' ? 'grip' : t === 'v' ? 'drop' : t === 'V' ? 'drop low' : t[0] === '*' ? 'tool on' : 'tool'
const art = (t: string): string => icons[t.replace('*', '')] ?? ''
const isTool = (t: string): boolean => kind(t).startsWith('tool')
const isDrop = (t: string): boolean => kind(t).startsWith('drop')

const query = ref('查找命令')
const tolerance = ref('0.0010')
const distance = ref('0')
const keepEdges = ref(false)
</script>

<template>
  <div class="app">
    <svg class="defs" width="0" height="0" aria-hidden="true">
      <defs>
        <linearGradient id="gBlueH"><stop offset="0" stop-color="#6478d8" /><stop offset=".4" stop-color="#b6c2f8" /><stop offset="1" stop-color="#5568cc" /></linearGradient>
        <linearGradient id="gSky"><stop offset="0" stop-color="#5f90d4" /><stop offset=".5" stop-color="#c6def6" /><stop offset="1" stop-color="#5f90d4" /></linearGradient>
        <linearGradient id="gPage" x1="0" y1="0" x2="1" y2="1"><stop offset="0" stop-color="#fff" /><stop offset="1" stop-color="#ccd0ea" /></linearGradient>
        <radialGradient id="gGlobe"><stop offset="0" stop-color="#a8ecec" /><stop offset=".6" stop-color="#4cb06a" /><stop offset="1" stop-color="#2f7fc0" /></radialGradient>
      </defs>
    </svg>

    <header class="title">
      <span class="brand">NX</span>
      <span class="name">NX 11.0.0.33 - 建模 - [_model1.prt （修改的）]</span>
    </header>

    <nav class="menu">
      <svg class="menu-logo" viewBox="0 0 24 24" aria-hidden="true">
        <path d="M2 5 7 2 12 4V12L16 10 22 13V18L13 22 2 18Z" fill="#2452cc" stroke="#173a9c" />
        <path d="M2 5 7 2 12 4 7 7ZM8 14 16 10 22 13 13 17Z" fill="#8fb2f4" />
        <path d="M7 7V14" fill="none" stroke="#8fb2f4" stroke-width="1.500" />
      </svg>
      <button v-for="m in menus" :key="m.text" type="button" :class="['menu-item', { wide: m.wide }]">{{ m.text }}<template v-if="m.key">(<u>{{ m.key }}</u>)</template></button>
    </nav>

    <div class="bar first">
      <button type="button" class="start">
        <svg viewBox="0 0 24 24" v-html="icons.launch"></svg><span>启动</span><i class="caret"></i>
      </button>
      <template v-for="(t, i) in rowStandard1" :key="i">
        <button v-if="isTool(t)" type="button" :class="kind(t)"><svg viewBox="0 0 24 24" v-html="art(t)"></svg></button>
        <button v-else-if="isDrop(t)" type="button" :class="kind(t)"><i class="caret"></i></button>
        <span v-else :class="kind(t)"></span>
      </template>
      <div class="search">
        <input v-model="query" type="text" aria-label="查找命令" />
        <svg viewBox="0 0 16 16" aria-hidden="true">
          <circle cx="10" cy="6" r="4.500" fill="none" stroke="#555" stroke-width="1.300" />
          <circle cx="10" cy="6" r="2" fill="none" stroke="#888" />
          <path d="M7 9 2 14M9 11 5 14" fill="none" stroke="#555" stroke-width="1.300" />
        </svg>
      </div>
      <template v-for="(t, i) in rowStandard2" :key="i">
        <button v-if="isTool(t)" type="button" :class="kind(t)"><svg viewBox="0 0 24 24" v-html="art(t)"></svg></button>
        <button v-else-if="isDrop(t)" type="button" :class="kind(t)"><i class="caret"></i></button>
        <span v-else :class="kind(t)"></span>
      </template>
    </div>

    <div v-for="(row, r) in [rowFeature, rowCurve]" :key="r" class="bar">
      <template v-for="(t, i) in row" :key="i">
        <button v-if="isTool(t)" type="button" :class="kind(t)"><svg viewBox="0 0 24 24" v-html="art(t)"></svg></button>
        <button v-else-if="isDrop(t)" type="button" :class="kind(t)"><i class="caret"></i></button>
        <span v-else :class="kind(t)"></span>
      </template>
    </div>

    <div class="bar filter">
      <div class="pick type"><select aria-label="类型过滤器" disabled><option></option></select><i class="caret dim"></i></div>
      <div class="pick scope"><select aria-label="选择范围" disabled><option>仅在工作部件内</option></select><i class="caret dim"></i></div>
      <template v-for="(t, i) in filterA" :key="i">
        <button v-if="isTool(t)" type="button" :class="kind(t)"><svg viewBox="0 0 24 24" v-html="art(t)"></svg></button>
        <button v-else-if="isDrop(t)" type="button" :class="kind(t)"><i class="caret"></i></button>
        <span v-else :class="kind(t)"></span>
      </template>
      <div class="pick all"><select aria-label="细节过滤"><option>全部</option></select><i class="caret"></i></div>
      <template v-for="(t, i) in filterB" :key="i">
        <button v-if="isTool(t)" type="button" :class="kind(t)"><svg viewBox="0 0 24 24" v-html="art(t)"></svg></button>
        <button v-else-if="isDrop(t)" type="button" :class="kind(t)"><i class="caret"></i></button>
        <span v-else :class="kind(t)"></span>
      </template>
      <div class="pick inside"><select aria-label="选择方式" disabled><option>内侧</option></select><i class="caret dim"></i></div>
      <template v-for="(t, i) in filterC" :key="i">
        <button v-if="isTool(t)" type="button" :class="kind(t)"><svg viewBox="0 0 24 24" v-html="art(t)"></svg></button>
        <span v-else :class="kind(t)"></span>
      </template>
      <div class="pick face"><select aria-label="面规则" disabled><option>车身面</option></select></div>
    </div>

    <div class="bar snap">
      <template v-for="(t, i) in rowSnap" :key="i">
        <button v-if="isTool(t)" type="button" :class="kind(t)"><svg viewBox="0 0 24 24" v-html="art(t)"></svg></button>
        <span v-else :class="kind(t)"></span>
      </template>
    </div>

    <main class="work">
      <aside class="side">
        <div class="dots"></div>
        <button v-for="(t, i) in side" :key="i" type="button" class="side-tool">
          <svg viewBox="0 0 24 24" v-html="art(t)"></svg>
          <i v-if="t === 'plane'" class="mark"></i>
        </button>
        <div class="more">
          <svg viewBox="0 0 42 16" aria-hidden="true"><path d="M7 4V12L3 8Z" fill="#222" /><path d="M29 3 31.500 6 34 3M29 8 31.500 11 34 8" fill="none" stroke="#222" stroke-width="1.600" /></svg>
        </div>
        <div class="dots"></div>
        <button type="button" class="side-tool"><svg viewBox="0 0 24 24" v-html="icons.plane3d"></svg></button>
      </aside>

      <section class="view">
        <svg class="scene" viewBox="42 237 1092 556" preserveAspectRatio="xMinYMin meet" role="img" aria-label="圆柱体">
          <defs>
            <linearGradient id="gBody" gradientUnits="userSpaceOnUse" x1="570" y1="380" x2="496" y2="643">
              <stop offset="0" stop-color="#74cc68" /><stop offset=".04" stop-color="#83e276" /><stop offset=".16" stop-color="#8bea7e" />
              <stop offset=".3" stop-color="#8ef080" /><stop offset=".38" stop-color="#a0f78a" /><stop offset=".44" stop-color="#a6f59a" />
              <stop offset=".51" stop-color="#82cf76" /><stop offset=".6" stop-color="#579b4e" /><stop offset=".68" stop-color="#477d40" />
              <stop offset=".8" stop-color="#3f6839" /><stop offset=".92" stop-color="#2f5029" /><stop offset="1" stop-color="#2c4826" />
            </linearGradient>
            <linearGradient id="gMark" x1="0" y1="0" x2="0" y2="1"><stop offset="0" stop-color="#56b2d6" /><stop offset=".5" stop-color="#3fa6ba" /><stop offset="1" stop-color="#5cb8e0" /></linearGradient>
          </defs>
          <path d="M569 380 1056 517 983 780 496 643A55 137 15.600 0 1 569 380Z" fill="url(#gBody)" stroke="#5fae55" stroke-width="1" />
          <ellipse cx="1019.500" cy="648.500" rx="55" ry="137" transform="rotate(15.600 1019.500 648.500)" fill="#5d9357" stroke="#4fa548" stroke-width="1.500" />

          <g fill="none" stroke="#b9cdb8" stroke-width="1.300">
            <path d="M604 568V508L634 485 694 499V557" opacity=".65" />
            <path d="M636 540V440" opacity=".8" />
            <path d="M604 568 660 584 694 557" stroke="#d3ddd2" />
            <path d="M633 543 574 595M646 543 742 570" stroke="#dfe6de" stroke-width="1.500" />
          </g>
          <path d="M633 440 636 425 639 440Z" fill="#857c8e" />
          <path d="M569 599 575 587 582 591Z" fill="#f2f5f2" />
          <path d="M737 565 753 573 735 572Z" fill="#eef2ee" />
          <g fill="none" stroke="#b5853f" stroke-width="2">
            <path d="M658 476 612 518 609 605 657 563Z" />
            <path d="M668 463 658 480 636 534" stroke-width="1.200" />
          </g>
          <path d="M632 535 648 543 632 545Z" fill="#178fdc" />
          <g class="axis">
            <text x="632" y="423" fill="#2a3fc4">Z</text>
            <text x="563" y="604" fill="#1b2fd0">X</text>
            <text x="753" y="579" fill="#b4c8b0">Y</text>
          </g>

          <path d="M875 691 917 715V763L875 786 833 763V715Z" fill="#2b6fa2" />
          <path d="M884 696 917 715V745C910 752 905 756 898 758V728C898 715 895 704 884 696Z" fill="#2d8ea8" />
          <path d="M852 750 875 763 898 750C896 766 870 774 850 764Z" fill="#3f97c4" />
          <path d="M917 742C905 768 880 774 846 762L842 768 875 786 917 763Z" fill="#62b9e2" />
          <path d="M852 727C838 737 838 762 850 773L833 763V735C838 731 845 728 852 727Z" fill="#5f8dcb" />
          <g fill="none" stroke="#e8f3ee" stroke-width="1.300">
            <path d="M834 722C848 703 882 700 898 728" />
            <path d="M884 696C895 704 898 715 898 728" />
            <path d="M917 742C905 768 880 774 846 762" />
            <path d="M852 727C838 737 838 762 850 773" />
            <path d="M833 735C838 731 845 728 852 727" />
          </g>
          <path d="M875 691 917 715V763L875 786 833 763V715Z" fill="none" stroke="#f4f7f2" stroke-width="3" stroke-linejoin="round" />
          <path d="M875 713 899 727V750L875 763 852 750V727Z" fill="#3c88ae" stroke="#e9f1e6" stroke-width="3" />
          <path d="M875 719 893 729 875 739 857 729Z" fill="#2b6ea4" />
          <path d="M857 729 875 739V757L857 748Z" fill="#205d94" />
          <path d="M893 729 875 739V757L893 748Z" fill="#4795bb" />
          <path d="M857 729 875 739 893 729M875 739V757" fill="none" stroke="#e4eee6" stroke-width="1.300" />
          <text class="mark-big" x="926" y="748">3D世界网</text>
          <text class="mark-small" x="928" y="770">www.3DSJW.COM</text>
        </svg>

        <div class="distance">
          <span class="grip2"></span>
          <label for="distance">距离</label>
          <div class="combo">
            <input id="distance" v-model="distance" type="text" />
            <button type="button" aria-label="展开"><i class="caret"></i></button>
          </div>
        </div>
      </section>

      <section class="dialog" role="dialog" aria-label="拆分体">
        <header>
          <svg class="gear" viewBox="0 0 20 20" aria-hidden="true">
            <circle cx="10" cy="10" r="5.500" fill="none" stroke="#fff" stroke-width="3" />
            <circle cx="10" cy="10" r="8.300" fill="none" stroke="#fff" stroke-width="2.600" stroke-dasharray="3.200 3.320" stroke-dashoffset="1.600" />
          </svg>
          <h1>拆分体</h1>
          <button type="button" aria-label="重置"><svg viewBox="0 0 20 20"><path d="M3 10A7 7 0 1 0 10 3.500" fill="none" stroke="#fff" stroke-width="2.400" /><path d="M0 11 3 5 7 10Z" fill="#fff" /></svg></button>
          <button type="button" aria-label="关闭"><svg viewBox="0 0 20 20"><path d="M4 4 16 16M16 4 4 16" stroke="#fff" stroke-width="4" /></svg></button>
        </header>

        <div class="panel target">
          <div class="head"><h2>目标</h2><button type="button" aria-label="折叠"><svg viewBox="0 0 20 16"><path d="M0 15 8 1H12L20 15H15L10 6 5 15Z" fill="#0b6784" /></svg></button></div>
          <div class="row">
            <svg class="tick" viewBox="0 0 14 14"><path d="M1 6 4 5 6 7 12 1 14 3 6 13H4Z" fill="#22b83a" /></svg>
            <span class="grow">选择体 (1)</span>
            <button type="button" class="square" aria-label="选择体"><svg viewBox="0 0 24 24"><path d="M2 6 12 1 22 6 12 10Z" fill="#fcc22e" stroke="#d9661c" /><path d="M2 6 12 10V22L2 18Z" fill="#fb9a1e" stroke="#d9661c" /><path d="M22 6 12 10V22L22 18Z" fill="#f5701a" stroke="#cf4f1c" /></svg></button>
          </div>
        </div>

        <div class="panel tools">
          <div class="head"><h2>工具</h2><button type="button" aria-label="折叠"><svg viewBox="0 0 20 16"><path d="M0 15 8 1H12L20 15H15L10 6 5 15Z" fill="#0b6784" /></svg></button></div>
          <div class="row">
            <label class="grow" for="tool-option">工具选项</label>
            <div class="pick plane"><select id="tool-option"><option>新建平面</option></select><i class="caret"></i></div>
          </div>
          <div class="row plane-row">
            <div class="active"><svg class="tick" viewBox="0 0 14 14"><path d="M1 6 4 5 6 7 12 1 14 3 6 13H4Z" fill="#22b83a" /></svg><span>指定平面</span></div>
            <button type="button" class="mini" aria-label="平面对话框"><svg viewBox="0 0 20 20"><path d="M7 2 16 4V13L7 11Z" fill="#eef3f8" stroke="#333" stroke-width="1.300" /><path d="M3 9V12C3 15 5 15 7 14M5 12 8 14 6 17" fill="none" stroke="#e8782c" stroke-width="1.800" /><path d="M10 17H12M13 17H15M16 17H18" stroke="#222" stroke-width="2" /></svg></button>
            <button type="button" class="yc" aria-label="YC 平面"><svg viewBox="0 0 30 28"><path d="M4 1V18" stroke="#3565a8" stroke-width="2" /><path d="M4 8 14 12V23L4 18Z" fill="#cdeaf2" stroke="#2a5a5a" stroke-width="1.300" /><path d="M4 18 17 25" stroke="#cf3a30" stroke-width="2" /><path d="M13 13 20 9" stroke="#3aa040" stroke-width="1.600" /><text x="12" y="10" font-size="11" font-weight="700" font-family="Liberation Sans" fill="#111">YC</text></svg></button>
            <button type="button" class="yc-drop" aria-label="更多平面"><i class="caret"></i></button>
          </div>
        </div>

        <div class="panel">
          <div class="head"><h2>设置</h2><button type="button" aria-label="折叠"><svg viewBox="0 0 20 16"><path d="M0 15 8 1H12L20 15H15L10 6 5 15Z" fill="#0b6784" /></svg></button></div>
          <div class="row">
            <label class="grow" for="tolerance">公差</label>
            <input id="tolerance" v-model="tolerance" type="text" class="number" />
          </div>
          <label class="check"><input v-model="keepEdges" type="checkbox" /><span>保留压印边</span></label>
        </div>

        <div class="panel">
          <div class="head"><h2>预览</h2><button type="button" aria-label="折叠"><svg viewBox="0 0 20 16"><path d="M0 15 8 1H12L20 15H15L10 6 5 15Z" fill="#0b6784" /></svg></button></div>
          <div class="row">
            <span class="grow right">显示结果</span>
            <button type="button" class="square near" aria-label="显示结果"><svg viewBox="0 0 24 24"><circle cx="9.500" cy="9" r="8" fill="#eef0f4" stroke="#6d7078" stroke-width="1.800" /><path d="M5 8C6 5 8 4 11 4" fill="none" stroke="#fff" stroke-width="2" /><path d="M15 15 22 22" stroke="#4a4538" stroke-width="4" /><path d="M15 14 21 20" stroke="#c9c08e" stroke-width="1.500" /></svg></button>
          </div>
        </div>

        <footer>
          <button type="button" class="ok">确定</button>
          <button type="button">应用</button>
          <button type="button">取消</button>
        </footer>
      </section>
    </main>
  </div>
</template>

<style>
body {
  background: #d3d3d3;
}
</style>

<style scoped>
.app {
  min-height: 100vh;
  display: flex;
  flex-direction: column;
  overflow: hidden;
  font-family: "Noto Sans", "Noto Sans CJK SC", sans-serif;
  font-size: 18px;
  color: #222;
}
.app * {
  box-sizing: border-box;
}
.defs {
  position: absolute;
}
button {
  border: 0;
  padding: 0;
  margin: 0;
  background: none;
  font: inherit;
  color: inherit;
  display: flex;
  align-items: center;
  justify-content: center;
  flex: none;
}
svg {
  display: block;
  flex: none;
}
.caret {
  width: 0;
  height: 0;
  border: 4px solid transparent;
  border-top: 5px solid #111;
  border-bottom: 0;
}

.title {
  height: 29px;
  display: flex;
  align-items: center;
  padding-bottom: 3px;
  background: #fff;
  white-space: nowrap;
}
.brand {
  width: 42px;
  font: 700 25px/26px "Liberation Sans", sans-serif;
  color: #7f9dae;
  border-right: 1px solid #e4e4e4;
}
.name {
  padding-left: 4px;
  font-size: 19px;
  line-height: 26px;
  color: #111;
}
.menu {
  height: 34px;
  display: flex;
  align-items: center;
  background: #539bb8;
  white-space: nowrap;
}
.menu-logo {
  width: 24px;
  height: 24px;
  margin-right: 6px;
}
.menu-item {
  line-height: 26px;
  margin-right: 12px;
  margin-bottom: 2px;
  color: #12303c;
}
.menu-item.wide {
  margin-left: 10px;
}

.bar {
  height: 34px;
  display: flex;
  align-items: center;
  background: #fcfcfc;
  border-bottom: 1px solid #e2e2e2;
  overflow: hidden;
}
.bar > * {
  flex: none;
}
.first {
  height: 39px;
}
.start {
  width: 79px;
  justify-content: flex-start;
  gap: 4px;
}
.start svg {
  width: 24px;
  height: 24px;
  margin-left: 3px;
}
.start span {
  white-space: nowrap;
}
.tool {
  width: 31px;
  height: 31px;
}
.tool svg {
  width: 24px;
  height: 24px;
  overflow: visible;
}
.on {
  background: #cfe6ee;
}
.drop {
  width: 17px;
  height: 31px;
}
.low {
  padding-top: 12px;
}
.sep {
  width: 6px;
  height: 28px;
  background: linear-gradient(90deg, transparent 2px, #dedede 2px, #dedede 3px, transparent 3px);
}
.grip {
  width: 10px;
  height: 30px;
  background: repeating-linear-gradient(#fcfcfc 0 2px, transparent 2px 4px), linear-gradient(90deg, transparent 5px, #8a8a8a 5px, #8a8a8a 7px, transparent 7px);
}
.search {
  width: 188px;
  height: 27px;
  margin: 0 6px 0 5px;
  display: flex;
  align-items: center;
  border: 1px solid #8c8c8c;
  background: #fff;
}
.search input {
  flex: 1;
  min-width: 0;
  border: 0;
  outline: 0;
  padding: 0 1px;
  background: none;
  font: inherit;
  font-size: 17px;
  color: #222;
}
.search svg {
  width: 16px;
  height: 16px;
  margin-right: 4px;
}

.pick {
  position: relative;
  height: 27px;
}
.pick select {
  width: 100%;
  height: 100%;
  appearance: none;
  border: 1px solid #8c8c8c;
  border-radius: 0;
  background: #fff;
  padding: 0 24px 0 3px;
  font: inherit;
  color: #222;
  opacity: 1;
}
.pick select:disabled {
  color: #a0a0a0;
}
.pick .caret {
  position: absolute;
  right: 7px;
  top: 50%;
  margin-top: -3px;
  border-width: 6px 6px 0;
  pointer-events: none;
}
.caret.dim {
  border-top-color: #9a9a9a;
}
.filter {
  height: 40px;
}
.type {
  width: 199px;
}
.type select {
  border-left: 0;
}
.scope {
  width: 213px;
  margin: 0 3px 0 7px;
}
.scope select {
  font-size: 17px;
}
.all {
  width: 81px;
  margin: 0 4px;
}
.inside {
  width: 169px;
  margin: 0 4px 0 6px;
}
.filter > .face {
  flex: 1 0 122px;
  margin-left: 2px;
}
.filter .face select {
  border-right: 0;
}
.filter .tool,
.snap .tool {
  width: 23px;
  height: 25px;
}
.filter .tool svg,
.snap .tool svg {
  width: 18px;
  height: 18px;
}
.filter .drop {
  width: 14px;
}
.snap {
  height: 27px;
  border-bottom-color: #7f8c90;
}
.snap .tool:first-child {
  margin-left: -5px;
}

.work {
  position: relative;
  flex: 1;
  display: flex;
  background: #d3d3d3;
}
.side {
  width: 42px;
  background: #fdfdfd;
  border-right: 1px solid #e6e6e6;
}
.dots {
  height: 2px;
  margin-top: 4px;
  background: repeating-linear-gradient(90deg, #8a8a8a 0 2px, transparent 2px 4px);
}
.side-tool {
  width: 34px;
  height: 31px;
  position: relative;
}
.side-tool svg {
  width: 24px;
  height: 24px;
  overflow: visible;
}
.mark {
  position: absolute;
  right: 1px;
  top: 13px;
  border: 3px solid transparent;
  border-right: 0;
  border-left: 4px solid #111;
  transform: rotate(45deg);
}
.more {
  padding: 28px 0 3px;
}
.more svg {
  width: 42px;
  height: 16px;
}
.view {
  flex: 1;
  position: relative;
  min-width: 0;
}
.scene {
  position: absolute;
  inset: 0;
  width: 100%;
  height: 100%;
}
.axis {
  font: 13px "Liberation Sans", sans-serif;
}
.mark-big {
  font: 700 46px "Noto Sans CJK SC", sans-serif;
  fill: url(#gMark);
  stroke: #eef7f6;
  stroke-width: 4px;
  stroke-linejoin: round;
  paint-order: stroke;
}
.mark-small {
  font: 700 20px "DejaVu Sans", sans-serif;
  fill: #4aa5c6;
  stroke: #eef7f6;
  stroke-width: 2px;
  stroke-linejoin: round;
  paint-order: stroke;
}

.distance {
  position: absolute;
  left: 626px;
  top: 190px;
  height: 38px;
  padding: 3px;
  display: flex;
  align-items: center;
  background: #f1f1f1;
  border: 1px solid #a4a4a4;
  outline: 1px solid #fafafa;
}
.grip2 {
  width: 7px;
  height: 30px;
  margin: 0 8px 0 1px;
  background: radial-gradient(circle, #8a8a8a 1px, transparent 1px) 0 0 / 4px 4px;
}
.distance label {
  padding-right: 3px;
}
.combo {
  width: 88px;
  height: 30px;
  display: flex;
  align-items: center;
  justify-content: space-between;
  padding: 0 7px 0 3px;
  background: #fff;
  border: 1px solid #8c8c8c;
}
.combo input {
  width: 14px;
  height: 24px;
  border: 0;
  padding: 0 2px;
  background: #2e8ce6;
  color: #fff;
  font: inherit;
}
.combo .caret {
  border-width: 6px 6px 0;
}

.dialog {
  position: absolute;
  left: 33px;
  top: 0;
  width: 429px;
  background: #ececec;
  border: 1px solid #dcdcdc;
  border-top: 0;
}
.dialog header {
  height: 32px;
  margin: 0 -1px;
  padding: 0 8px 0 10px;
  display: flex;
  align-items: center;
  background: #549cb9;
  color: #fff;
}
.gear {
  width: 20px;
  height: 20px;
}
h1 {
  flex: 1;
  margin: 0 0 0 10px;
  font-size: 21px;
  font-weight: 400;
  line-height: 30px;
}
.dialog header button {
  width: 20px;
  height: 20px;
  margin-left: 9px;
}
.dialog header svg {
  width: 20px;
  height: 20px;
}
.panel {
  margin: 4px 5px 0;
  padding: 0 9px 7px 8px;
  background: #fdfdfd;
  border-bottom: 1px solid #c4c4c4;
}
.target {
  padding-bottom: 6px;
}
.target .row {
  margin-top: 2px;
}
.tools {
  padding-bottom: 9px;
}
.head {
  height: 34px;
  display: flex;
  align-items: center;
  justify-content: space-between;
}
h2 {
  margin: 0;
  font-size: 22px;
  font-weight: 400;
  line-height: 32px;
  color: #0b6784;
}
.head button {
  margin-right: -4px;
  margin-bottom: 3px;
}
.head svg {
  width: 20px;
  height: 16px;
}
.row {
  min-height: 36px;
  display: flex;
  align-items: center;
}
.grow {
  flex: 1;
}
.right {
  text-align: right;
}
.tick {
  width: 14px;
  height: 14px;
  margin: 0 5px 0 1px;
}
.square {
  width: 32px;
  height: 32px;
  border: 1px solid #9a9a9a;
  background: #fff;
}
.square svg {
  width: 24px;
  height: 24px;
}
.near {
  margin-left: 2px;
}
.plane {
  width: 152px;
  height: 32px;
}
.plane-row {
  min-height: 32px;
}
.active {
  flex: 1;
  height: 32px;
  display: flex;
  align-items: center;
  background: #ffe176;
}
.mini {
  width: 24px;
  height: 24px;
  margin: 0 2px;
  border: 1px solid #9a9a9a;
  background: #fff;
}
.mini svg {
  width: 20px;
  height: 20px;
}
.yc,
.yc-drop {
  height: 32px;
  background: #ffe176;
}
.yc {
  width: 32px;
  border-right: 1px solid #fff3c4;
}
.yc svg {
  width: 30px;
  height: 28px;
}
.yc-drop {
  width: 26px;
}
.number {
  width: 90px;
  height: 30px;
  border: 1px solid #8c8c8c;
  padding: 0 4px;
  background: #fff;
  font: 20px "Noto Sans Mono CJK SC", "Liberation Sans", sans-serif;
  color: #444;
  text-align: right;
}
.check {
  display: flex;
  align-items: center;
  height: 28px;
}
.check input {
  appearance: none;
  width: 22px;
  height: 22px;
  margin: 0 4px 0 0;
  border: 1px solid #7a7a7a;
  background: linear-gradient(135deg, #cfcfcf, #f2f2f2);
  box-shadow: inset 0 0 0 1px #f6f6f6;
}
.dialog footer {
  display: flex;
  justify-content: flex-end;
  gap: 5px;
  padding: 11px 15px 10px 0;
}
.dialog footer button {
  width: 66px;
  height: 32px;
  background: #dcdcdc;
  border: 1px solid #a2a2a2;
}
.dialog footer .ok {
  background: #73b1cb;
  border-color: #73b1cb;
  color: #fff;
}
</style>
